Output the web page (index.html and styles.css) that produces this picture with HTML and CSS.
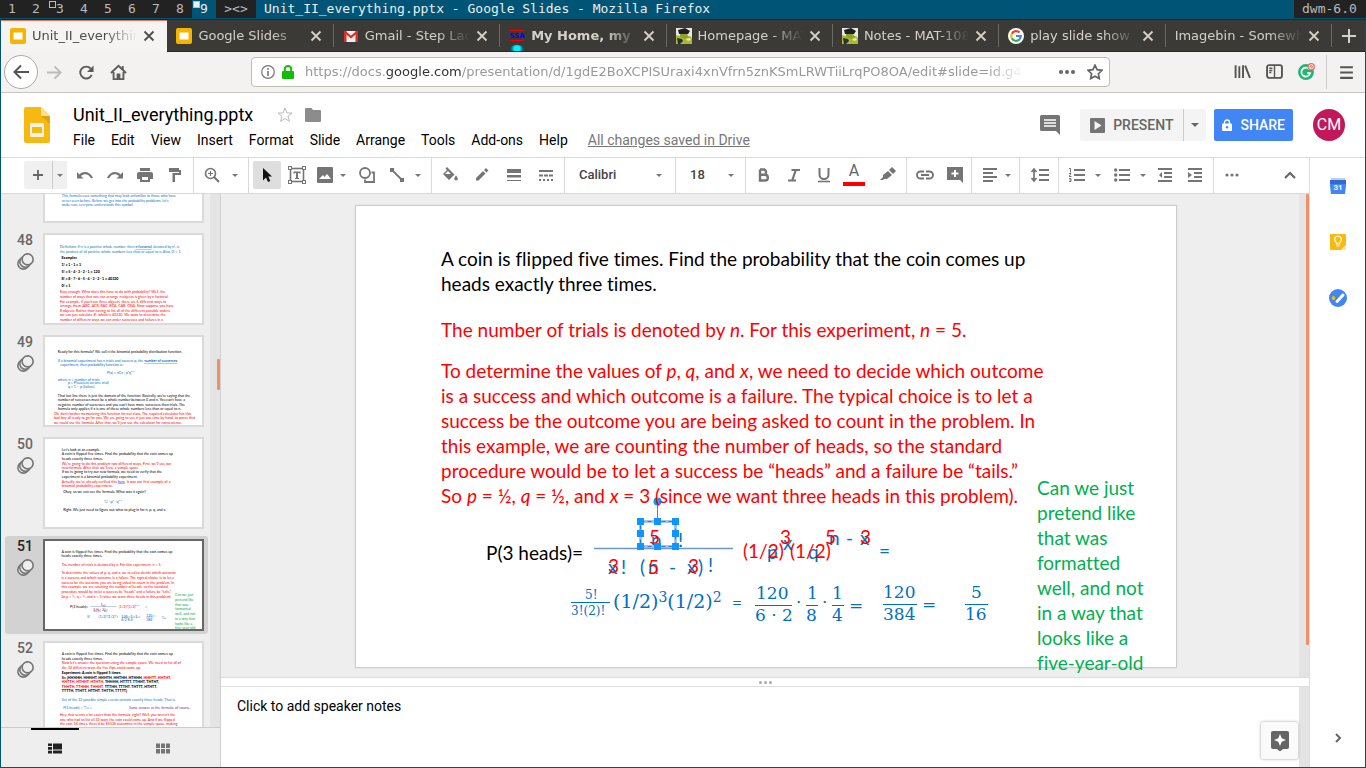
FILE: index.html
```html
<!DOCTYPE html>
<html lang="en">
<head>
<meta charset="utf-8">
<title>Unit_II_everything.pptx - Google Slides</title>
<link rel="stylesheet" href="styles.css">
</head>
<body>
<svg class="defs" aria-hidden="true">
  <symbol id="close" viewBox="0 0 12 12"><path d="M1.5 1.5l9 9M10.5 1.5l-9 9" stroke="currentColor" stroke-width="1.8" fill="none"/></symbol>
  <symbol id="slidesfav" viewBox="0 0 16 16"><rect width="16" height="16" rx="2" fill="#f4b400"/><rect x="3.5" y="4.5" width="9" height="7" fill="#fff"/></symbol>
  <symbol id="gator" viewBox="0 0 16 16"><rect width="16" height="16" fill="#e8e8e8"/><path d="M0 7l4 1 4 1 6-1 2 2v6H0z" fill="#a9b83c"/><path d="M2 2l7-2 5 3-2 3H3z" fill="#1c2023"/><path d="M4 6h7l2 3-4 2-5-2z" fill="#8fa02c"/><path d="M1 10l5 1 1 2-3 3H2z" fill="#25352b"/><path d="M10 11l4-1 1 2-3 1z" fill="#ecf07c"/></symbol>
  <symbol id="caret" viewBox="0 0 8 4"><path d="M0 0h8L4 4z" fill="currentColor"/></symbol>
  <symbol id="rings" viewBox="0 0 16 16"><g fill="#eee" stroke="#757575" stroke-width="1.5"><circle cx="6" cy="10" r="5.2"/><circle cx="7.800" cy="8.200" r="5.2"/><circle cx="10" cy="6" r="5.2"/></g></symbol>
</svg>

<header class="wm">
  <span class="tag">1</span><span class="tag">2</span><span class="tag has">3</span><span class="tag">4</span><span class="tag">5</span><span class="tag">6</span><span class="tag">7</span><span class="tag">8</span><span class="tag on">9</span>
  <span class="layout">&gt;&lt;&gt;</span>
  <span class="wtitle">Unit_II_everything.pptx - Google Slides - Mozilla Firefox</span>
  <span class="status">dwm-6.0</span>
</header>

<div class="window">
  <div class="tabs">
    <div class="tab active"><svg class="fav"><use href="#slidesfav"/></svg><span class="tname">Unit_II_everything.pptx</span><button class="x" aria-label="Close tab"><svg><use href="#close"/></svg></button></div>
    <div class="tab"><svg class="fav"><use href="#slidesfav"/></svg><span class="tname">Google Slides</span><button class="x" aria-label="Close tab"><svg><use href="#close"/></svg></button></div>
    <div class="tab"><svg class="fav" viewBox="0 0 16 16"><rect x="1" y="3" width="14" height="11" rx="1" fill="#eee"/><path d="M1 3h2.500v11H1zM12.500 3H15v11h-2.500z" fill="#d93025"/><path d="M1.500 3.500L8 9l6.500-5.500" fill="none" stroke="#d93025" stroke-width="2.200"/></svg><span class="tname">Gmail - Step Ladder</span><button class="x" aria-label="Close tab"><svg><use href="#close"/></svg></button></div>
    <div class="tab attention"><svg class="fav" viewBox="0 0 16 16"><path d="M1 2.500h14M1 12.500h14" stroke="#e00"/><text x="8" y="10" text-anchor="middle" class="ssa">SSA</text></svg><span class="tname">My Home, my Social</span><button class="x" aria-label="Close tab"><svg><use href="#close"/></svg></button></div>
    <div class="tab"><svg class="fav"><use href="#gator"/></svg><span class="tname">Homepage - MAT-108</span><button class="x" aria-label="Close tab"><svg><use href="#close"/></svg></button></div>
    <div class="tab"><svg class="fav"><use href="#gator"/></svg><span class="tname">Notes - MAT-108-00</span><button class="x" aria-label="Close tab"><svg><use href="#close"/></svg></button></div>
    <div class="tab"><svg class="fav" viewBox="0 0 16 16"><circle cx="8" cy="8" r="8" fill="#fff"/><g fill="none" stroke-width="2.200"><path d="M11.500 4.600A4.800 4.800 0 0 0 3.800 5.700" stroke="#ea4335"/><path d="M3.800 5.700a4.800 4.800 0 0 0 0 4.600" stroke="#fbbc05"/><path d="M3.800 10.300a4.800 4.800 0 0 0 7.400 1.300" stroke="#34a853"/><path d="M11.200 11.600A4.800 4.800 0 0 0 12.800 8H8" stroke="#4285f4"/></g></svg><span class="tname">play slide show on</span><button class="x" aria-label="Close tab"><svg><use href="#close"/></svg></button></div>
    <div class="tab last"><span class="tname">Imagebin - Somewhere</span><button class="x" aria-label="Close tab"><svg><use href="#close"/></svg></button></div>
    <button class="newtab" aria-label="New tab"><svg viewBox="0 0 14 14"><path d="M7 0v14M0 7h14" stroke="currentColor" stroke-width="2"/></svg></button>
  </div>

  <nav class="navbar">
    <button class="back" aria-label="Back"><svg viewBox="0 0 18 18"><path d="M17 9H3M9 2.500L2.500 9 9 15.500" fill="none" stroke="#555" stroke-width="2"/></svg></button>
    <button class="nb" aria-label="Forward"><svg viewBox="0 0 18 18"><path d="M1 9h14M9 2.500L15.500 9 9 15.500" fill="none" stroke="#bbb" stroke-width="2"/></svg></button>
    <button class="nb" aria-label="Reload"><svg viewBox="0 0 18 18"><path d="M14.500 11.500A6.300 6.300 0 1 1 13.500 5" fill="none" stroke="#5c5c5c" stroke-width="2"/><path d="M16.500 1.500v7h-7z" fill="#5c5c5c"/></svg></button>
    <button class="nb" aria-label="Home"><svg viewBox="0 0 18 18"><path d="M1 9.500L9 2l8 7.500M3.800 8.500V16h10.400V8.500" fill="none" stroke="#5c5c5c" stroke-width="2"/><path d="M12.500 2h2v4h-2zM7 10h4v6H7z" fill="#5c5c5c"/></svg></button>
    <div class="urlbar">
      <svg class="info" viewBox="0 0 14 14"><circle cx="7" cy="7" r="6.300" fill="none" stroke="#777" stroke-width="1.200"/><path d="M7 6v5M7 3v1.800" stroke="#777" stroke-width="1.600"/></svg>
      <svg class="lock" viewBox="0 0 12 14"><path d="M2.800 7V4.200a3.200 3.200 0 0 1 6.400 0V7" fill="none" stroke="#12bc00" stroke-width="2"/><rect y="6" width="12" height="8" rx="1" fill="#12bc00"/></svg>
      <div class="url">https://docs.<b>google.com</b>/presentation/d/1gdE2BoXCPISUraxi4xnVfrn5znKSmLRWTiiLrqPO8OA/edit#slide=id.g45</div>
      <svg class="dots" viewBox="0 0 16 4"><g fill="#666"><circle cx="2" cy="2" r="2"/><circle cx="8" cy="2" r="2"/><circle cx="14" cy="2" r="2"/></g></svg>
      <svg class="star" viewBox="0 0 16 16"><path d="M8 1.200l2.100 4.500 4.900.6-3.600 3.400.9 4.900L8 12.200l-4.300 2.400.9-4.900L1 6.300l4.900-.6z" fill="none" stroke="#666" stroke-width="1.700"/></svg>
    </div>
    <div class="navright">
      <button class="nb" aria-label="Library"><svg viewBox="0 0 16 16"><path d="M1.500 2v12M5 3v11M8.500 2v12M10.500 2.500l4.500 11.500" stroke="#555" stroke-width="1.800"/></svg></button>
      <button class="nb" aria-label="Sidebar"><svg viewBox="0 0 16 16"><rect x="1" y="2" width="14" height="12" rx="2" fill="none" stroke="#555" stroke-width="1.800"/><path d="M8 2v12M3 5h3M3 7h3M3 9h2" stroke="#555" stroke-width="1.300"/></svg></button>
      <button class="nb" aria-label="Grammar extension"><svg viewBox="0 0 16 16"><circle cx="7.500" cy="8.500" r="7.500" fill="#22b573"/><path d="M10.500 5.700A4.200 4.200 0 1 0 11.500 9.500H8.500" fill="none" stroke="#fff" stroke-width="1.600"/><circle cx="12.500" cy="3.500" r="3.500" fill="#ef6a64"/><circle cx="12.500" cy="3.500" r="2" fill="none" stroke="#fff" stroke-width=".8"/><path d="M11 5l3-3" stroke="#fff" stroke-width=".8"/></svg></button>
      <button class="nb burger" aria-label="Menu"><svg viewBox="0 0 16 16"><path d="M2 3h12M2 8h12M2 13h12" stroke="#555" stroke-width="2"/></svg></button>
    </div>
  </nav>

  <header class="dochead">
    <svg class="logo" viewBox="0 0 26 36"><path d="M2 0h15l9 9v25a2 2 0 0 1-2 2H2a2 2 0 0 1-2-2V2a2 2 0 0 1 2-2z" fill="#f5b912"/><path d="M17 0l9 9h-9z" fill="#fbdf93"/><path d="M17 9h9v8z" fill="#dca410"/><rect x="6" y="16" width="14" height="14" rx="1" fill="#f6f1e4"/><rect x="8" y="20" width="10" height="6" fill="#f5b912"/></svg>
    <div class="docmeta">
      <div class="titleline"><h1>Unit_II_everything.pptx</h1>
        <svg class="tstar" viewBox="0 0 16 16"><path d="M8 1l2 5h5l-4 3.300 1.500 5.200L8 11.500l-4.500 3L5 9.300 1 6h5z" fill="none" stroke="#bbb"/></svg>
        <svg class="folder" viewBox="0 0 16 14"><path d="M1 0h5.500L8 2h7a1 1 0 0 1 1 1v10a1 1 0 0 1-1 1H1a1 1 0 0 1-1-1V1a1 1 0 0 1 1-1z" fill="#8c8c8c"/></svg>
      </div>
      <div class="menus"><button>File</button><button>Edit</button><button>View</button><button>Insert</button><button>Format</button><button>Slide</button><button>Arrange</button><button>Tools</button><button>Add-ons</button><button>Help</button><a href="#" class="saved">All changes saved in Drive</a></div>
    </div>
    <div class="actions">
      <button class="cmt" aria-label="Comments"><svg viewBox="0 0 20 20"><path d="M1.500 0h17A1.500 1.500 0 0 1 20 1.500V20l-4-4H1.500A1.500 1.500 0 0 1 0 14.500v-13A1.500 1.500 0 0 1 1.500 0z" fill="#757575"/><path d="M4 5h12M4 8h12M4 11h12" stroke="#fff" stroke-width="1.500"/></svg></button>
      <div class="present"><button><svg viewBox="0 0 15 15"><rect width="15" height="15" rx="1" fill="#757575"/><path d="M4.500 3v9l7-4.500z" fill="#f4f4f4"/></svg>PRESENT</button><button class="pc" aria-label="Present options"><svg><use href="#caret"/></svg></button></div>
      <button class="share"><svg viewBox="0 0 10 12"><path d="M2.500 5V3.500a2.500 2.500 0 0 1 5 0V5" fill="none" stroke="#fff" stroke-width="1.400"/><rect y="4.500" width="10" height="7.500" rx="1" fill="#fff"/><circle cx="5" cy="8.200" r="1.200" fill="#4285f4"/></svg>SHARE</button>
      <span class="avatar">CM</span>
    </div>
  </header>

  <div class="workspace">
    <div class="app">
      <div class="toolbar">
        <div class="grp first">
          <button class="tb soft" aria-label="New slide"><svg viewBox="0 0 16 16"><path d="M8 3v10M3 8h10" stroke="#666" stroke-width="1.800"/></svg></button><button class="soft softc" aria-label="New slide layout"><svg class="cr"><use href="#caret"/></svg></button>
          <button class="tb m4" aria-label="Undo"><svg viewBox="0 0 16 16"><path d="M0 5v6.500h6.500L4 9c3.500-3 8-2 10 2.500l2-.7C13 4.500 6.500 3.500 2.500 7.500z" fill="#757575"/></svg></button>
          <button class="tb m2" aria-label="Redo"><svg viewBox="0 0 16 16"><path d="M16 5v6.500H9.500L12 9C8.500 6 4 7 2 11.500l-2-.7C3 4.500 9.500 3.500 13.500 7.500z" fill="#757575"/></svg></button>
          <button class="tb m2" aria-label="Print"><svg viewBox="0 0 16 16"><path d="M3 1h10v3H3zM2 5h12a2 2 0 0 1 2 2v5h-3v3H3v-3H0V7a2 2 0 0 1 2-2zm3 5v3h6v-3z" fill="#757575" fill-rule="evenodd"/></svg></button>
          <button class="tb m2" aria-label="Paint format"><svg viewBox="0 0 16 16"><path d="M2 1h10v2h2v5H8v7H5.500V6H12V5H2z" fill="#757575"/></svg></button>
        </div>
        <div class="grp p9"><button class="tb" aria-label="Zoom"><svg viewBox="0 0 16 16"><circle cx="6.500" cy="6.500" r="5" fill="none" stroke="#757575" stroke-width="1.600"/><path d="M10 10l5 5" stroke="#757575" stroke-width="2"/><path d="M6.500 4v5M4 6.500h5" stroke="#757575" stroke-width="1.200"/></svg></button><svg class="cr m6"><use href="#caret"/></svg></div>
        <div class="grp p9"><button class="tb sel" aria-label="Select"><svg viewBox="0 0 16 16"><path d="M4 1v12.500l3-3 2 4.500 2.300-1-2-4.500H13z" fill="#111"/></svg></button>
          <button class="tb m2 big" aria-label="Text box"><svg viewBox="0 0 18 18"><rect x="2.500" y="2.500" width="13" height="13" fill="none" stroke="#757575" stroke-width="1.600"/><path d="M5.500 5.500h7v2.300h-1V7H10v5h1v1H7v-1h1V7H6.500v.8h-1z" fill="#757575"/><g fill="#fff" stroke="#757575"><rect x=".5" y=".5" width="3" height="3"/><rect x="14.500" y=".5" width="3" height="3"/><rect x=".5" y="14.500" width="3" height="3"/><rect x="14.500" y="14.500" width="3" height="3"/></g></svg></button>
          <button class="tb" aria-label="Image"><svg viewBox="0 0 16 16"><path d="M1 0h14a1 1 0 0 1 1 1v14a1 1 0 0 1-1 1H1a1 1 0 0 1-1-1V1a1 1 0 0 1 1-1zm1 12h12l-4-5-2.500 3L6 8z" fill="#757575" fill-rule="evenodd"/></svg></button><svg class="cr"><use href="#caret"/></svg>
          <button class="tb m6" aria-label="Shape"><svg viewBox="0 0 16 16"><circle cx="6" cy="6" r="5" fill="none" stroke="#757575" stroke-width="1.800"/><path d="M12.500 5.500H15V15H6v-2.500" fill="none" stroke="#757575" stroke-width="1.800"/></svg></button>
          <button class="tb m2" aria-label="Line"><svg viewBox="0 0 16 16"><path d="M2 2l12 12" stroke="#757575" stroke-width="1.800"/><path d="M1 1h4v4H1zM11 11h4v4h-4z" fill="#757575"/></svg></button><svg class="cr m4"><use href="#caret"/></svg></div>
        <div class="grp"><button class="tb" aria-label="Fill color"><svg viewBox="0 0 16 16"><path d="M5 0l7.500 7.500L7 13 1 7l4-4-1.500-1.500zM6 4L3 7h6z" fill="#757575"/><path d="M14 8.500s1.800 2 1.800 3.200a1.700 1.700 0 0 1-3.500 0c0-1.200 1.700-3.200 1.700-3.200z" fill="#757575"/></svg></button>
          <button class="tb m4" aria-label="Line color"><svg viewBox="0 0 16 16"><path d="M2 11l7-7 2.500 2.500-7 7H2zM10 3l2-2 2.500 2.500-2 2z" fill="#757575"/></svg></button>
          <button class="tb m4" aria-label="Line weight"><svg viewBox="0 0 16 16"><path d="M1 2h14v4H1zM1 8h14v2.500H1zM1 13h14v1H1z" fill="#757575"/></svg></button>
          <button class="tb m4" aria-label="Line dash"><svg viewBox="0 0 16 16"><path d="M1 4h14" stroke="#757575" stroke-width="2"/><path d="M1 8.500h14" stroke="#757575" stroke-width="2" stroke-dasharray="4 1"/><path d="M1 13h14" stroke="#757575" stroke-width="2" stroke-dasharray="2"/></svg></button></div>
        <div class="grp"><button class="pick font">Calibri<svg class="cr"><use href="#caret"/></svg></button></div>
        <div class="grp"><button class="pick size">18<svg class="cr"><use href="#caret"/></svg></button></div>
        <div class="grp"><button class="tb" aria-label="Bold"><svg viewBox="0 0 16 16"><path d="M4 2.500h4.500a3 3 0 0 1 0 5.300H4m0-5.300v11h5a2.800 2.800 0 0 0 0-5.700" fill="none" stroke="#757575" stroke-width="2.400"/></svg></button>
          <button class="tb m2" aria-label="Italic"><svg viewBox="0 0 16 16"><path d="M5.500 3H14M2 13.500h8M9.800 3L6.200 13.500" stroke="#757575" stroke-width="2.200"/></svg></button>
          <button class="tb m2" aria-label="Underline"><svg viewBox="0 0 16 16"><path d="M3.500 1v6.500a4.300 4.300 0 0 0 9 0V1" fill="none" stroke="#757575" stroke-width="2"/><path d="M2 14.500h12" stroke="#757575" stroke-width="1.600"/></svg></button>
          <button class="tb m2 tcolor" aria-label="Text color">A</button>
          <button class="tb m6" aria-label="Highlight color"><svg viewBox="0 0 16 16"><path d="M8 4l4 4-5 4H4l-1 1H0l3-3V8zM9 3l3-3 4 4-3 3z" fill="#757575"/></svg></button></div>
        <div class="grp p2"><button class="tb" aria-label="Insert link"><svg class="wide" viewBox="0 0 18 10"><path d="M8 1.500H4.500a3.500 3.500 0 0 0 0 7H8M10 1.500h3.500a3.500 3.500 0 0 1 0 7H10M5 5h8" fill="none" stroke="#757575" stroke-width="1.900"/></svg></button>
          <button class="tb m2" aria-label="Insert comment"><svg viewBox="0 0 16 16"><path d="M0 0h16v16l-3-3H0z" fill="#757575"/><path d="M8 3v7M4.500 6.500h7" stroke="#fff" stroke-width="2"/></svg></button></div>
        <div class="grp p7"><button class="tb" aria-label="Align"><svg viewBox="0 0 16 16"><path d="M1 2h14M1 6h10M1 10h14M1 14h10" stroke="#757575" stroke-width="1.800"/></svg></button><svg class="cr"><use href="#caret"/></svg></div>
        <div class="grp"><button class="tb m2" aria-label="Line spacing"><svg class="wide" viewBox="0 0 18 16"><path d="M8 3h10M8 8h10M8 13h10" stroke="#757575" stroke-width="2"/><path d="M3 2v12M.5 5L3 2l2.500 3M.5 11L3 14l2.500-3" fill="none" stroke="#757575" stroke-width="1.700"/></svg></button></div>
        <div class="grp"><button class="tb" aria-label="Numbered list"><svg viewBox="0 0 16 16"><path d="M5 3h11M5 8h11M5 13h11" stroke="#757575" stroke-width="2"/><path d="M0 1.500h1.500v4M0 6.500h2L0 9.500h2.500M0 11.500h2v3H0M.5 13H2" fill="none" stroke="#757575"/></svg></button><svg class="cr m4"><use href="#caret"/></svg>
          <button class="tb m6" aria-label="Bulleted list"><svg viewBox="0 0 16 16"><path d="M5 3h11M5 8h11M5 13h11" stroke="#757575" stroke-width="2"/><g fill="#757575"><circle cx="1.700" cy="3" r="1.700"/><circle cx="1.700" cy="8" r="1.700"/><circle cx="1.700" cy="13" r="1.700"/></g></svg></button><svg class="cr m4"><use href="#caret"/></svg>
          <button class="tb m4" aria-label="Decrease indent"><svg viewBox="0 0 16 16"><path d="M1 2h14M7 6h8M7 10h8M1 14h14" stroke="#757575" stroke-width="1.800"/><path d="M5 5v6L2 8z" fill="#757575"/></svg></button>
          <button class="tb m2" aria-label="Increase indent"><svg viewBox="0 0 16 16"><path d="M1 2h14M7 6h8M7 10h8M1 14h14" stroke="#757575" stroke-width="1.800"/><path d="M1 5v6l4-3z" fill="#757575"/></svg></button></div>
        <div class="grp end"><button class="tb" aria-label="More"><svg viewBox="0 0 16 16"><g fill="#757575"><circle cx="3" cy="8" r="1.600"/><circle cx="8" cy="8" r="1.600"/><circle cx="13" cy="8" r="1.600"/></g></svg></button>
          <button class="tb hide" aria-label="Hide the menus"><svg viewBox="0 0 16 16"><path d="M3 11l5-5 5 5" fill="none" stroke="#666" stroke-width="2.200"/></svg></button></div>
      </div>

      <div class="panes">
        <aside class="film">
          <div class="strip">
            <ol class="thumbs">
              <li><div class="num">47</div><svg class="thumb" viewBox="0 0 820 461"><text class="blue"><tspan x="88" y="334">This formula uses something that may look unfamiliar to those who have</tspan><tspan x="88" dy="25">never seen before. Before we get into the probability problems, let’s</tspan><tspan x="88" dy="25">make sure everyone understands this symbol.</tspan></text></svg></li>
              <li><div class="num">48<svg><use href="#rings"/></svg></div><svg class="thumb" viewBox="0 0 820 461"><text class="blue"><tspan x="78" y="68">Definition: If n is a positive whole number, then </tspan><tspan class="u">n factorial</tspan><tspan>, denoted by n!, is</tspan><tspan x="78" dy="26">the product of all positive whole numbers less than or equal to n. Also, 0! = 1.</tspan></text><text class="bold"><tspan x="86" y="126">Examples</tspan><tspan x="86" y="164">1! = 1 · 1 = 1</tspan><tspan x="86" y="198">5! = 5 · 4 · 3 · 2 · 1 = 120</tspan><tspan x="86" y="236">8! = 8 · 7 · 6 · 5 · 4 · 3 · 2 · 1 = 40320</tspan><tspan x="86" y="272">0! = 1</tspan></text><text class="red"><tspan x="78" y="306">Easy enough. What does this have to do with probability? Well, the</tspan><tspan x="78" dy="24">number of ways that one can arrange n objects is given by n factorial.</tspan><tspan x="78" dy="24">For example, if you have three objects, there are 6 different ways to</tspan><tspan x="78" dy="24">arrange them (ABC, ACB, BAC, BCA, CAB, CBA). Now suppose you have</tspan><tspan x="78" dy="24">8 objects. Rather than having to list all of the different possible orders,</tspan><tspan x="78" dy="24">we can just calculate 8!, which is 40320. We want to determine the</tspan><tspan x="78" dy="24">number of different ways we can order successes and failures in a</tspan></text></svg></li>
              <li><div class="num">49<svg><use href="#rings"/></svg></div><svg class="thumb" viewBox="0 0 820 461"><text x="67" y="83">Ready for this formula? We call it the binomial probability distribution function.</text><text class="navy"><tspan x="67" y="131">If a binomial experiment has n trials and success p, the </tspan><tspan class="u">number of successes</tspan><tspan x="80" y="150">experiment, then probability function is:</tspan><tspan x="325" y="192">P(x) = nCx · pˣqⁿ⁻ˣ</tspan><tspan x="67" y="230">where n = number of trials</tspan><tspan x="120" y="248">p = P(success on one trial)</tspan><tspan x="120" y="266">q = 1 – p (failure)</tspan></text><text><tspan x="67" y="313">That last line there is just the domain of the function. Basically, we’re saying that the</tspan><tspan x="67" dy="24">number of successes must be a whole number between 0 and n. You can’t have a</tspan><tspan x="67" dy="24">negative number of successes and you can’t have more successes than trials. The</tspan><tspan x="67" dy="24">formula only applies if x is one of these whole numbers less than or equal to n.</tspan></text><text class="red"><tspan x="47" y="408">Oh, don’t bother memorizing this function for our class. The required calculator has this</tspan><tspan x="47" dy="24">bad boy all ready to go for you. We are going to use it just one time by hand, to prove that</tspan><tspan x="47" dy="24">we could use the formula. After that, we’ll just use the calculator for convenience.</tspan></text></svg></li>
              <li><div class="num">50<svg><use href="#rings"/></svg></div><svg class="thumb" viewBox="0 0 820 461"><text><tspan x="88" y="62">Let’s look at an example.</tspan><tspan x="88" y="85">A coin is flipped five times. Find the probability that the coin comes up</tspan><tspan x="88" y="109">heads exactly three times.</tspan></text><text class="red"><tspan x="88" y="134">We’re going to do this problem two different ways. First, we’ll use our</tspan><tspan x="88" y="156">new formula. After that, we’ll use a sample space.</tspan></text><text><tspan x="88" y="178">If we’re going to try our new formula, we need to verify that the</tspan><tspan x="88" y="202">experiment is a binomial probability experiment.</tspan></text><text class="red"><tspan x="88" y="228">Actually, we’ve already verified this </tspan><tspan class="link">here</tspan><tspan>. It was our first example of a</tspan><tspan x="88" y="254">binomial probability experiment.</tspan></text><text><tspan x="95" y="285">Okay, so we can use the formula. What was it again?</tspan><tspan x="95" y="378">Right. We just need to figure out what to plug in for n, p, q, and x.</tspan></text><text class="navy" x="310" y="334">ⁿ⁄ₓ!  · pˣ · qⁿ⁻ˣ</text></svg></li>
              <li class="cur"><div class="num">51<svg><use href="#rings"/></svg></div><svg class="thumb" viewBox="0 0 820 461"><text><tspan x="86" y="61">A coin is flipped five times. Find the probability that the coin comes up</tspan><tspan x="86" y="86">heads exactly three times.</tspan></text><text class="red"><tspan x="86" y="132">The number of trials is denoted by n. For this experiment, n = 5.</tspan><tspan x="86" y="173">To determine the values of p, q, and x, we need to decide which outcome</tspan><tspan x="86" dy="25">is a success and which outcome is a failure. The typical choice is to let a</tspan><tspan x="86" dy="25">success be the outcome you are being asked to count in the problem. In</tspan><tspan x="86" dy="25">this example, we are counting the number of heads, so the standard</tspan><tspan x="86" dy="25">procedure would be to let a success be “heads” and a failure be “tails.”</tspan><tspan x="86" dy="25">So p = ½, q = ½, and x = 3 (since we want three heads in this problem).</tspan></text><text x="131" y="353">P(3 heads)=</text><text class="red"><tspan x="292" y="339">5</tspan><tspan x="252" y="367">3  (5 - 3)</tspan><tspan x="387" y="351">(1/2)³(1/2)⁵⁻³</tspan></text><text class="navy"><tspan x="303" y="344">n!</tspan><tspan x="256" y="370">x! (n - x)!</tspan><tspan x="524" y="351">=</tspan><tspan x="220" y="404">5!</tspan><tspan x="280" y="404">(1/2)³(1/2)²=</tspan><tspan x="400" y="404">120 · 1 · 1 =</tspan><tspan x="400" y="418">6·2  8  4</tspan><tspan x="530" y="398">120 =</tspan><tspan x="530" y="418">384</tspan><tspan x="612" y="408">5⁄16</tspan></text><path d="M238 343h138M400 399h90M530 399h36" stroke="#4a7ebb" stroke-width="2"/><text class="green"><tspan x="681" y="289">Can we just</tspan><tspan x="681" dy="25">pretend like</tspan><tspan x="681" dy="25">that was</tspan><tspan x="681" dy="25">formatted</tspan><tspan x="681" dy="25">well, and not</tspan><tspan x="681" dy="25">in a way that</tspan><tspan x="681" dy="25">looks like a</tspan><tspan x="681" dy="24">five-year-old</tspan></text></svg></li>
              <li><div class="num">52<svg><use href="#rings"/></svg></div><svg class="thumb" viewBox="0 0 820 461"><text><tspan x="88" y="62">A coin is flipped five times. Find the probability that the coin comes up</tspan><tspan x="88" y="87">heads exactly three times.</tspan></text><text class="red"><tspan x="88" y="109">Now let’s answer the question using the sample space. We need to list all of</tspan><tspan x="88" y="134">the 32 different ways the five flips could come up.</tspan></text><text class="bold"><tspan x="88" y="160">Experiment: A coin is flipped 5 times.</tspan><tspan x="88" y="186">S= {HHHHH, HHHHT, HHHTH, HHTHH, HTHHH, </tspan><tspan class="red">HHHTT, HHTHT,</tspan><tspan x="88" y="210" class="red">HHTTH, HTHHT, HTHTH, </tspan><tspan>THHHH, HTTTT, TTHHT, THTHT,</tspan><tspan x="88" y="234" class="red">THHTH, TTHHH, THHHT, </tspan><tspan>TTTHH, TTTHT, THTTT, HTHTT,</tspan><tspan x="88" y="258">TTTTH, TTHTT, HTTHT, THTTH, TTTTT}</tspan></text><text class="blue"><tspan x="88" y="306">Set of the 32 possible simple events contain exactly three heads. That is,</tspan><tspan x="95" y="348">P(3 heads) =   ¹⁰⁄₃₂  =</tspan></text><text class="purple" x="440" y="348">Same answer as the formula, of course.</text><text class="red"><tspan x="78" y="384">Hey, that seems a lot easier than the formula, right? Well, you weren’t the</tspan><tspan x="78" dy="24">one who had to list all 32 ways the coin could come up. And if we flipped</tspan><tspan x="78" dy="24">the coin 16 times, there’d be 65536 outcomes in the sample space, making</tspan></text></svg></li>
            </ol>
            <div class="track"><i class="bar"></i></div>
          </div>
          <div class="views">
            <button class="on" aria-label="Filmstrip view"><svg viewBox="0 0 14 10"><path d="M0 0h4v2.500H0zM0 3.500h4v2.800H0zM0 7.300h4V10H0zM5 0h9v6H5zM5 7h9v3H5z" fill="#222"/></svg></button>
            <button aria-label="Grid view"><svg viewBox="0 0 14 10"><path d="M0 0h4v4.500H0zM5 0h4v4.500H5zM10 0h4v4.500h-4zM0 5.500h4V10H0zM5 5.500h4V10H5zM10 5.500h4V10h-4z" fill="#757575"/></svg></button>
          </div>
        </aside>

        <main class="editor">
          <section class="canvas">
            <div class="slide">
              <div class="body">
                <p>A coin is flipped five times. Find the probability that the coin comes up<br>heads exactly three times.</p>
                <p class="red">The number of trials is denoted by <i>n</i>. For this experiment, <i>n</i> = 5.</p>
                <p class="red">To determine the values of <i>p</i>, <i>q</i>, and <i>x</i>, we need to decide which outcome<br>is a success and which outcome is a failure. The typical choice is to let a<br>success be the outcome you are being asked to count in the problem. In<br>this example, we are counting the number of heads, so the standard<br>procedure would be to let a success be “heads” and a failure be “tails.”<br>So <i>p</i> = ½, <i>q</i> = ½, and <i>x</i> = 3 (since we want three heads in this problem).</p>
              </div>
              <svg class="math" viewBox="0 0 820 461">
                <text x="130" y="354">P(3 heads)=</text>
                <g class="navy"><text x="295" y="341">n</text><text x="322" y="341">!</text><text x="252" y="368">x</text><text x="265" y="368">!</text><text x="284" y="368">(</text><text x="292" y="368">n</text><text x="313" y="368">-</text><text x="331" y="368">x</text><text x="342" y="368">)</text><text x="352" y="366">!</text>
                <text x="411" y="353">p</text><text x="427" y="344">x</text><text x="452" y="353">q</text><text x="473" y="339">n</text><text x="490" y="339">-</text><text x="504" y="339">x</text><text x="523" y="352">=</text></g>
                <g class="red"><text x="293" y="338">5</text><text x="252" y="367">3</text><text x="292" y="368">5</text><text x="332" y="367">3</text><text x="387" y="352">(1/2)</text><text x="424" y="338">3</text><text x="434" y="352">(1/2)</text><text x="469" y="338">5</text><text x="504" y="338">3</text></g>
                <path d="M238 342.500h139" stroke="#6f97cc" stroke-width="1.500"/>
                <g class="serif"><g class="sm"><text x="229" y="393">5!</text><text x="215" y="409">3!(2)!</text></g>
                <text x="257" y="402" class="f19">(1/2)<tspan dy="-6" class="sup">3</tspan><tspan dy="6">(1/2)</tspan><tspan dy="-6" class="sup">2</tspan></text><text x="376" y="401" class="sm">=</text>
                <text x="400" y="393">120</text><text x="399" y="415">6 · 2</text><text x="440" y="402">·</text><text x="451" y="393">1</text><text x="450" y="415">8</text><text x="466" y="402">·</text><text x="476" y="393">1</text><text x="476" y="415">4</text><text x="493" y="405">=</text>
                <text x="527" y="392">120</text><text x="527" y="414">384</text><text x="566" y="404">=</text><text x="615" y="392">5</text><text x="609" y="414">16</text></g>
                <path d="M215 396.500h39M399 399.500h37M450 399.500h12M476 399.500h12M527 398.500h34M609 398.500h23" stroke="#0070c0"/>
                <g><path d="M284.500 315.500h35v25h-35z" fill="none" stroke="#a3c3ef" stroke-width="3"/><path d="M284.500 315.500h35v25h-35z" fill="none" stroke="#2a7de1" stroke-dasharray="4 3"/><path d="M301.500 296v19" stroke="#2196f3"/><circle cx="301.500" cy="295.500" r="4" fill="#0d96ff"/><path d="M281 312h7v7h-7zM298 312h7v7h-7zM316 312h7v7h-7zM281 324h7v7h-7zM316 324h7v7h-7zM281 337h7v7h-7zM298 337h7v7h-7zM316 337h7v7h-7z" fill="#0d96ff"/></g>
              </svg>
              <p class="note">Can we just<br>pretend like<br>that was<br>formatted<br>well, and not<br>in a way that<br>looks like a<br>five-year-old</p>
            </div>
            <div class="track"><i class="bar"></i></div>
          </section>
          <div class="split"><i></i><i></i><i></i></div>
          <section class="notes">Click to add speaker notes
            <div class="track"></div>
            <button class="explore" aria-label="Explore"><svg viewBox="0 0 18 20"><path d="M2 0h14a2 2 0 0 1 2 2v14a2 2 0 0 1-2 2h-4l-3 2.500L6 18H2a2 2 0 0 1-2-2V2a2 2 0 0 1 2-2z" fill="#666"/><path d="M9 3l1.700 4.300L15 9l-4.300 1.700L9 15l-1.700-4.300L3 9l4.300-1.700z" fill="#fff"/></svg></button>
          </section>
        </main>
      </div>
    </div>

    <aside class="side">
      <button aria-label="Calendar"><svg viewBox="0 0 18 18"><path d="M2 1h14v3H2z" fill="#c8ccd4"/><path d="M1 3h16v6l-1 8H2L1 9z" fill="#4285f4"/><path d="M1 3h16v4H1z" fill="#3367d6"/><text x="9" y="13" text-anchor="middle">31</text></svg></button>
      <button aria-label="Keep"><svg viewBox="0 0 18 18"><path d="M2 1h14a1 1 0 0 1 1 1v10l-5 5H2a1 1 0 0 1-1-1V2a1 1 0 0 1 1-1z" fill="#f9bb0b"/><path d="M17 12v4a1 1 0 0 1-1 1h-4z" fill="#fde293"/><path d="M7.500 11V9.500a3.400 3.400 0 1 1 3 0V11zM7.500 13h3" fill="none" stroke="#fff" stroke-width="1.200"/></svg></button>
      <button aria-label="Tasks"><svg viewBox="0 0 18 18"><circle cx="9" cy="9" r="9" fill="#4285f4"/><circle cx="4.500" cy="9" r="1.900" fill="#f9bb0b"/><path d="M8 12.500l6-6.500" stroke="#fff" stroke-width="3" stroke-linecap="round"/></svg></button>
      <button class="open" aria-label="Hide side panel"><svg viewBox="0 0 18 18"><path d="M7 5l4 4-4 4" fill="none" stroke="#666" stroke-width="2"/></svg></button>
    </aside>
  </div>
</div>
</body>
</html>
```
FILE: styles.css
```css
* { box-sizing: border-box; }
body { margin: 0; height: 100vh; display: flex; flex-direction: column; overflow: hidden; background: #fff; font-family: Roboto, sans-serif; color: #000; }
button { border: 0; background: none; padding: 0; margin: 0; font: inherit; color: inherit; display: flex; align-items: center; justify-content: center; }
svg { display: block; flex: none; }
.defs { position: absolute; width: 0; height: 0; }

/* window manager bar */
.wm { display: flex; height: 19px; border-bottom: 1px solid #005577; background: #005577; color: #bbb; font: 13px/18px "DejaVu Sans Mono", monospace; flex: none; }
.wm > span { background: #222; white-space: pre; }
.tag { position: relative; width: 24px; text-align: center; }
.tag.has::before, .tag.on::before { content: ""; position: absolute; left: 1px; top: 1px; width: 5px; height: 5px; border: 1px solid #bbb; }
.wm .tag.on { background: #005577; color: #eee; }
.tag.on::before { background: #eee; }
.layout { width: 40px; text-align: center; }
.wm .wtitle { background: #005577; color: #eee; flex: 1; padding-left: 8px; }
.status { width: 72px; padding-left: 8px; }

.window { flex: 1; min-height: 0; display: flex; flex-direction: column; border: 1px solid #005577; border-top: 1px solid #222; }

/* browser tabs */
.tabs { display: flex; height: 32px; flex: none; background: #3b3a36; color: #d6d1c8; font: 13px/30px "DejaVu Sans", sans-serif; border-bottom: 1px solid #2a2926; }
.tab { position: relative; flex: 1; min-width: 0; display: flex; align-items: center; padding: 0 12px 0 9px; gap: 6px; }
.tab::after { content: ""; position: absolute; right: 0; top: 4px; bottom: 4px; width: 1px; background: #6a6964; }
.tab.active { background: #f5f4f2; color: #4c4c4c; border-top: 1px solid #e9764d; margin-bottom: -1px; padding-bottom: 2px; }
.tab.active::after { display: none; }
.tab.attention { font-weight: bold; }
.tab.attention::before { content: ""; position: absolute; left: 10px; bottom: 0; width: 14px; height: 6px; background: radial-gradient(circle at 50% 60%, #00f0ff 35%, #0a6e7a 70%, transparent); border-radius: 50% 50% 0 0; }
.fav { width: 16px; height: 16px; }
.ssa { font: bold 7px "DejaVu Sans", sans-serif; fill: #00f; }
.tname { flex: 1; min-width: 0; overflow: hidden; white-space: nowrap; mask-image: linear-gradient(to right, #000 calc(100% - 32px), transparent); }
.x svg { width: 12px; height: 12px; }
.newtab { width: 33px; }
.newtab svg { width: 14px; height: 14px; }

/* navigation bar */
.navbar { display: flex; align-items: center; height: 41px; flex: none; background: #f3f2f1; border-bottom: 1px solid #c8c4c0; padding-left: 3px; }
.back { width: 34px; height: 34px; border: 1px solid #aaa; border-radius: 50%; background: #fff; }
.back svg { width: 18px; height: 18px; }
.nb { width: 32px; height: 32px; }
.nb svg { width: 17px; height: 17px; }
.urlbar { flex: 1; min-width: 0; height: 30px; margin-left: 117px; display: flex; align-items: center; background: #fff; border: 1px solid #bfbbb7; border-radius: 4px; padding: 0 6px 0 9px; color: #999; font: 13px/28px "DejaVu Sans", sans-serif; }
.info { width: 14px; height: 14px; }
.lock { width: 12px; height: 14px; margin: 0 11px 0 7px; }
.url { flex: 1; min-width: 0; overflow: hidden; white-space: nowrap; mask-image: linear-gradient(to right, #000 calc(100% - 36px), transparent); margin-right: 36px; }
.url b { font-weight: normal; color: #333; }
.dots { width: 16px; height: 4px; margin-right: 12px; }
.star { width: 16px; height: 16px; }
.navright { display: flex; width: 255px; justify-content: flex-end; }
.burger { width: 39px; height: 34px; margin-left: 4px; border-left: 1px solid #ccc; }

/* document header */
.dochead { display: flex; height: 64px; flex: none; padding: 0 20px 0 23px; }
.logo { width: 26px; height: 36px; margin-top: 14px; }
.docmeta { flex: 1; min-width: 0; margin-left: 23px; padding-top: 10px; }
.titleline { display: flex; align-items: center; height: 24px; }
h1 { margin: 0; font: 18px/24px Roboto, sans-serif; }
.tstar { width: 16px; height: 16px; margin-left: 24px; }
.folder { width: 16px; height: 14px; margin-left: 12px; }
.menus { display: flex; gap: 16px; font-size: 14px; line-height: 24px; padding-top: 1px; }
.saved { color: #777; margin-left: 4px; }
.actions { display: flex; align-items: center; }
.cmt { margin-right: 20px; }
.cmt svg { width: 20px; height: 20px; }
.present { display: flex; height: 32px; background: #f4f4f4; border-radius: 2px; color: #666; font: 500 14px/32px Roboto, sans-serif; }
.present button { padding: 0 10px; gap: 8px; }
.present button svg { width: 15px; height: 15px; }
.present .pc { border-left: 1px solid #ccc; padding: 0 7px; }
.present .pc svg { width: 8px; height: 4px; }
.share { height: 32px; margin-left: 8px; padding: 0 8px; gap: 8px; background: #4285f4; color: #fff; border-radius: 2px; font: 500 14px/32px Roboto, sans-serif; }
.share svg { width: 10px; height: 12px; }
.avatar { margin-left: 20px; width: 32px; height: 32px; border-radius: 50%; background: #c2185b; color: #fff; font-size: 16px; line-height: 32px; text-align: center; }

.workspace { flex: 1; min-height: 0; display: flex; border-top: 1px solid #d9d9d9; }
.app { flex: 1; min-width: 0; display: flex; flex-direction: column; }

/* toolbar */
.toolbar { display: flex; height: 36px; flex: none; border-bottom: 1px solid #d9d9d9; color: #444; }
.grp { display: flex; align-items: center; padding: 0 4px 1px; border-right: 1px solid #d9d9d9; }
.grp.first { padding-left: 23px; }
.grp.end { flex: 1; border-right: 0; }
.grp.p2 { padding-right: 2px; }
.grp.p7 { padding-right: 7px; }
.grp.p9 { padding-right: 9px; }
.tb { width: 28px; height: 28px; border-radius: 2px; }
.tb svg { width: 16px; height: 16px; }
.tb.big svg, .tb svg.wide { width: 18px; }
.tb.big svg { height: 18px; }
.soft { background: #f0f0f0; }
.softc { width: 15px; height: 28px; border-left: 1px solid #ccc; }
.sel { background: #dedede; }
.cr { width: 6px; height: 3px; margin-left: 1px; margin-right: 1px; color: #777; }
.m2 { margin-left: 2px; }
.m4 { margin-left: 4px; }
.m6 { margin-left: 6px; }
.pick { justify-content: space-between; height: 28px; font: 500 13px/28px Roboto, sans-serif; padding: 0 8px 0 10px; }
.font { width: 102px; }
.size { width: 61px; padding-right: 6px; }
.tcolor { position: relative; font-size: 16px; line-height: 20px; align-items: flex-start; color: #666; }
.tcolor::after { content: ""; position: absolute; left: 3px; bottom: 3px; width: 22px; height: 4px; background: #f00; }
.hide { margin-left: auto; margin-right: 1px; }

/* filmstrip */
.panes { flex: 1; min-height: 0; display: flex; background: #eee; }
.film { width: 220px; flex: none; display: flex; flex-direction: column; border-right: 1px solid #d0d0d0; }
.strip { position: relative; flex: 1; min-height: 0; overflow: hidden; }
.thumbs { list-style: none; margin: -66px 14px 0 4px; padding: 0; display: grid; gap: 4px; }
.thumbs li { display: flex; gap: 10px; padding: 3px 4px 3px 0; border-radius: 3px; }
.num { width: 28px; font-size: 14px; line-height: 14px; color: #666; text-align: right; font-weight: 500; }
.num svg { width: 17px; height: 17px; margin: 6px 0 0 12px; }
.thumb { flex: 1; min-width: 0; height: 92px; background: #fff; border: 2px solid #dadada; overflow: hidden; font: 19px Lato, sans-serif; font-variant-ligatures: none; }
.cur { background: #d2d2d2; }
.cur .num { color: #222; font-weight: 500; }
.cur .thumb { border-color: #666; }
.red { fill: #f00; color: #f00; }
.blue { fill: #0f75bd; }
.navy { fill: #0070c0; }
.green { fill: #00b050; }
.purple { fill: #7030a0; }
.bold { font-weight: 900; }
.u { text-decoration: underline; font-weight: bold; }
.link { fill: #22f; text-decoration: underline; }
.track { position: absolute; right: 0; top: 0; bottom: 0; width: 10px; background: #e4e4e4; }
.bar { position: absolute; right: 0; width: 3px; background: #f0906a; border-radius: 1px; }
.film .bar { top: 165px; height: 31px; }
.views { display: flex; height: 40px; flex: none; border-top: 1px solid #ccc; }
.views button { flex: 1; border-top: 2px solid transparent; }
.views .on { flex: none; width: 48px; margin: 0 26px 0 30px; border-top-color: #000; }
.views svg { width: 14px; height: 11px; }

/* slide canvas */
.editor { flex: 1; min-width: 0; display: flex; flex-direction: column; }
.canvas { position: relative; flex: 1; min-height: 0; display: flex; justify-content: center; align-items: center; padding: 2px 0 0 2px; }
.slide { position: relative; width: 822px; border: 1px solid #ccc; background: #fff; box-shadow: 0 0 2px #ddd; }
.body, .math, .note { font: 19px/25px Lato, sans-serif; font-variant-ligatures: none; }
.body { position: absolute; left: 85px; top: 40px; white-space: nowrap; }
.body p { margin: 0 0 16px; }
.body p:first-child { margin-bottom: 21px; }
.math { width: 100%; overflow: visible; }
.serif { font: 17px "DejaVu Serif", serif; fill: #0070c0; }
.serif .sm { font-size: 12px; }
.f19 { font-size: 19px; }
.sup { font-size: 14px; }
.note { position: absolute; left: 681px; top: 269px; margin: 0; color: #00b050; white-space: nowrap; }
.canvas .bar { top: 0; bottom: 32px; }
.split { display: flex; height: 10px; flex: none; justify-content: center; align-items: center; gap: 2px; background: #fff; border: 1px solid #ddd; border-width: 1px 0; }
.split i { width: 3px; height: 3px; border-radius: 50%; background: #aaa; }
.notes { position: relative; height: 80px; flex: none; background: #fff; padding: 8px 16px; font-size: 14px; line-height: 22px; }
.explore { position: absolute; right: 11px; bottom: 8px; width: 37px; height: 37px; background: #fafafa; border-radius: 2px; box-shadow: 0 0 3px #999; }
.explore svg { width: 18px; height: 20px; }

/* side panel */
.side { width: 56px; flex: none; display: flex; flex-direction: column; align-items: center; padding: 18px 0 19px; gap: 36px; border-left: 1px solid #ddd; }
.side button { width: 20px; height: 20px; }
.side svg { width: 18px; height: 18px; }
.side text { font: bold 8px Roboto, sans-serif; fill: #fff; }
.side .open { margin-top: auto; }
```
